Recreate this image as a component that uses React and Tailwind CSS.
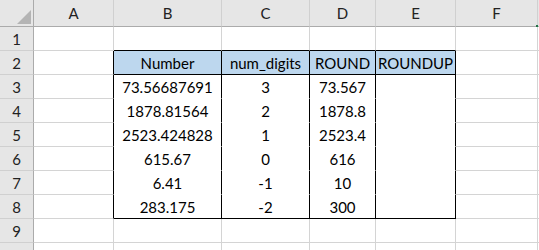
import React from "react";

const cols = ["A", "B", "C", "D", "E", "F", ""];
const data = {
  2: ["", "Number", "num_digits", "ROUND", "ROUNDUP", "", ""],
  3: ["", "73.56687691", "3", "73.567", "", "", ""],
  4: ["", "1878.81564", "2", "1878.8", "", "", ""],
  5: ["", "2523.424828", "1", "2523.4", "", "", ""],
  6: ["", "615.67", "0", "616", "", "", ""],
  7: ["", "6.41", "-1", "10", "", "", ""],
  8: ["", "283.175", "-2", "300", "", "", ""],
};

function cellClass(r, c) {
  let right = "border-r-[#d4d4d4]";
  let bottom = "border-b-[#d4d4d4]";
  let bg = "bg-white";
  const inTable = r >= 2 && r <= 8 && c >= 1 && c <= 4;
  if (r >= 2 && r <= 8 && c >= 0 && c <= 4) right = "border-r-black";
  if (r === 1 && c >= 1 && c <= 4) bottom = "border-b-black";
  if (inTable) {
    if (r === 2 || r === 8) bottom = "border-b-black";
    else bottom = "border-b-white";
  }
  if (r === 2 && inTable) bg = "bg-[#bdd7ee]";
  return `${right} ${bottom} ${bg}`;
}

export default function App() {
  const rows = [1, 2, 3, 4, 5, 6, 7, 8, 9, 10];
  return (
    <div
      className="w-[539px] h-[250px] overflow-hidden bg-white text-[15px] text-black"
      style={{ fontFamily: "Lato, 'Open Sans', sans-serif" }}
    >
      <div className="grid grid-cols-[34px_80px_108px_88px_66px_80px_82px_40px]">
        <div className="h-[27px] bg-[#e6e6e6] border-r border-b border-r-[#ababab] border-b-[#ababab] relative">
          <div className="absolute right-[2px] bottom-[2px] w-0 h-0 border-l-[14px] border-l-transparent border-b-[14px] border-b-[#b4b4b4]" />
        </div>
        {cols.map((c, i) => (
          <div
            key={c + i}
            className="h-[27px] bg-[#e6e6e6] border-r border-b border-r-[#d0d0d0] border-b-[#ababab] flex items-center justify-center pt-[1px] text-[#222] relative"
          >
            {c}
            {c === "F" && (
              <div className="absolute right-[-2px] bottom-[-1px] w-[3px] h-[2px] bg-[#217346]" />
            )}
          </div>
        ))}
        {rows.map((r) => (
          <React.Fragment key={r}>
            <div className="h-[24px] bg-[#e6e6e6] border-r border-b border-r-[#ababab] border-b-[#d0d0d0] flex items-center justify-center pt-[1px] text-[#222]">
              {r < 10 ? r : ""}
            </div>
            {cols.map((_, c) => (
              <div
                key={c}
                className={`h-[24px] border-r border-b ${cellClass(r, c)} flex items-center justify-center pt-[1px] whitespace-nowrap`}
              >
                {data[r] ? data[r][c] : ""}
              </div>
            ))}
          </React.Fragment>
        ))}
      </div>
    </div>
  );
}
